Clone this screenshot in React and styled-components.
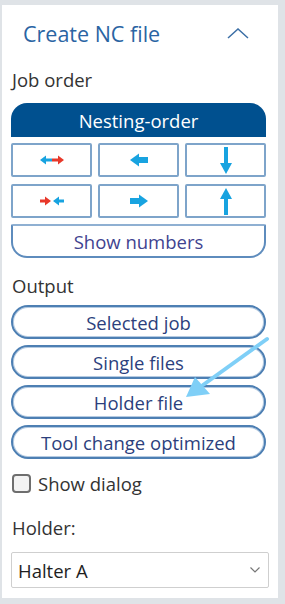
import React from "react";
import styled, { createGlobalStyle } from "styled-components";

const GlobalStyle = createGlobalStyle`
  html, body { margin: 0; padding: 0; background: #dfe3e7; }
  body { font-family: "Open Sans", "Noto Sans", sans-serif; }
`;

const Panel = styled.div`
  position: relative;
  box-sizing: border-box;
  width: 276px;
  height: 593px;
  margin: 5px 0 0 2px;
  background: #ffffff;
  padding: 0 11px 0 9px;
  display: flex;
  flex-direction: column;
`;

const Header = styled.div`
  display: flex;
  align-items: center;
  justify-content: space-between;
  height: 56px;
  padding: 0 18px 0 12px;
`;

const Title = styled.div`
  font-size: 21.5px;
  color: #2a64a3;
`;

const Label = styled.div`
  font-size: 18.5px;
  color: #333;
  padding-left: 1px;
  margin-top: ${(p) => p.$mt || 0}px;
  height: 24px;
  line-height: 24px;
`;

const Group = styled.div`
  margin-top: ${(p) => p.$mt || 0}px;
  width: 255px;
  display: flex;
  flex-direction: column;
  gap: 6px;
`;

const GroupHeader = styled.div`
  height: 34px;
  background: #00508f;
  border-radius: 16px 16px 0 0;
  color: #fff;
  font-size: 18.5px;
  display: flex;
  align-items: center;
  justify-content: center;
`;

const Grid = styled.div`
  display: grid;
  grid-template-columns: repeat(3, 1fr);
  gap: 7px 6px;
`;

const IconButton = styled.div`
  box-sizing: border-box;
  height: 34px;
  border: 2px solid #7ea4ca;
  border-radius: 2px;
  display: flex;
  align-items: center;
  justify-content: center;
  background: #fff;
`;

const WideButton = styled.div`
  box-sizing: border-box;
  height: 34px;
  border: 2px solid #5e8cbd;
  border-top-color: #8fb0d2;
  border-radius: 2px 2px 16px 16px;
  display: flex;
  align-items: center;
  justify-content: center;
  font-size: 18.5px;
  color: #3f4390;
`;

const Pill = styled.div`
  box-sizing: border-box;
  height: 34px;
  border: 2px solid #4d7fb3;
  box-shadow: inset 0 0 0 1px #b5cbe2;
  border-radius: 17px;
  display: flex;
  align-items: center;
  justify-content: center;
  font-size: 18.5px;
  color: #2c3f7d;
`;

const CheckRow = styled.label`
  display: flex;
  align-items: center;
  gap: 7px;
  height: 24px;
  margin-top: 12px;
  padding-left: 1px;
  font-size: 18.5px;
  color: #333;
`;

const Box = styled.span`
  box-sizing: border-box;
  width: 19px;
  height: 19px;
  border: 2px solid #6e6e6e;
  border-radius: 4px;
  background: #f3f3f3;
`;

const Select = styled.div`
  box-sizing: border-box;
  margin-top: 12px;
  width: 258px;
  height: 36px;
  border: 1px solid #cfcfcf;
  border-radius: 2px;
  display: flex;
  align-items: center;
  justify-content: space-between;
  padding: 0 8px 0 6px;
  font-size: 18.5px;
  color: #1e1e1e;
`;

const Overlay = styled.svg`
  position: absolute;
  left: 0;
  top: 0;
  pointer-events: none;
`;

const HArrow = ({ right }) => (
  <svg width="20" height="14" viewBox="0 0 20 14">
    <g transform={right ? "rotate(180 10 7)" : undefined}>
      <rect x="8" y="4" width="11" height="6" fill="#18a3e0" />
      <polygon points="1,7 10,0.5 10,13.5" fill="#18a3e0" />
    </g>
  </svg>
);

const VArrow = ({ up }) => (
  <svg width="12" height="27" viewBox="0 0 12 27">
    <g transform={up ? "rotate(180 6 13.5)" : undefined}>
      <rect x="4" y="0" width="4" height="18" fill="#18a3e0" />
      <polygon points="0,16 12,16 6,27" fill="#18a3e0" />
    </g>
  </svg>
);

const DoubleArrow = ({ outward }) => (
  <svg width="24" height="12" viewBox="0 0 24 12">
    {outward ? (
      <>
        <rect x="5" y="4.5" width="7" height="3" fill="#18a3e0" />
        <polygon points="0,6 6,1.5 6,10.5" fill="#18a3e0" />
        <rect x="12" y="4.5" width="7" height="3" fill="#e8382a" />
        <polygon points="24,6 18,1.5 18,10.5" fill="#e8382a" />
      </>
    ) : (
      <>
        <rect x="0" y="4.5" width="6" height="3" fill="#e8382a" />
        <polygon points="11,6 5,1.5 5,10.5" fill="#e8382a" />
        <rect x="18" y="4.5" width="6" height="3" fill="#18a3e0" />
        <polygon points="13,6 19,1.5 19,10.5" fill="#18a3e0" />
      </>
    )}
  </svg>
);

export default function App() {
  return (
    <>
      <GlobalStyle />
      <Panel>
        <Header>
          <Title>Create NC file</Title>
          <svg width="22" height="11" viewBox="0 0 22 11">
            <polyline points="1,10 11,1 21,10" fill="none" stroke="#3c6fa6" strokeWidth="1.5" />
          </svg>
        </Header>
        <Label $mt={7}>Job order</Label>
        <Group $mt={11}>
          <GroupHeader>Nesting-order</GroupHeader>
          <Grid>
            <IconButton><DoubleArrow outward /></IconButton>
            <IconButton><HArrow /></IconButton>
            <IconButton><VArrow /></IconButton>
            <IconButton><DoubleArrow /></IconButton>
            <IconButton><HArrow right /></IconButton>
            <IconButton><VArrow up /></IconButton>
          </Grid>
          <WideButton>Show numbers</WideButton>
        </Group>
        <Label $mt={16}>Output</Label>
        <Group $mt={7}>
          <Pill>Selected job</Pill>
          <Pill>Single files</Pill>
          <Pill>Holder file</Pill>
          <Pill>Tool change optimized</Pill>
        </Group>
        <CheckRow>
          <Box />
          Show dialog
        </CheckRow>
        <Label $mt={21}>Holder:</Label>
        <Select>
          <span>Halter A</span>
          <svg width="10" height="6" viewBox="0 0 10 6">
            <polyline points="0.5,0.5 5,5 9.5,0.5" fill="none" stroke="#777" strokeWidth="1.2" />
          </svg>
        </Select>
        <Overlay width="276" height="593" viewBox="0 0 276 593">
          <line x1="265" y1="334" x2="201" y2="380" stroke="#7fcff7" strokeWidth="4" strokeLinecap="round" />
          <polygon points="184,392 193,372 208,389" fill="#7fcff7" />
        </Overlay>
      </Panel>
    </>
  );
}
